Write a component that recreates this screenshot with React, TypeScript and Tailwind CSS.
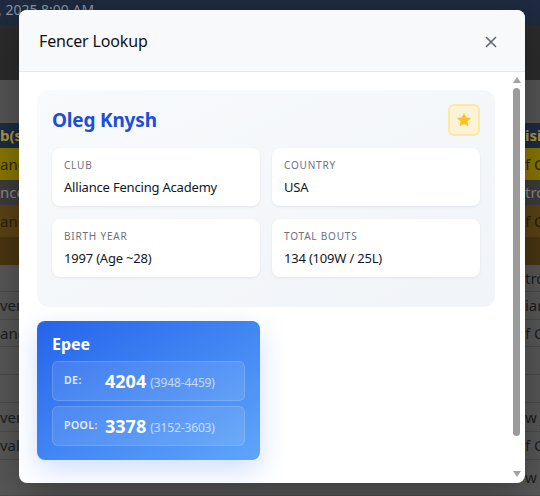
import React from "react";

const rows: { h: number; bg: string; left: string; right: string; tc: string; bold?: boolean; border?: boolean }[] = [
  { h: 43, bg: "bg-[#565656]", left: "", right: "", tc: "text-[#222]" },
  { h: 25, bg: "bg-[#1e2c45]", left: "b(s", right: "isi", tc: "text-[#b09a3c]", bold: true },
  { h: 32, bg: "bg-[#8a7800]", left: "anc", right: "f C", tc: "text-[#302a00]" },
  { h: 25, bg: "bg-[#3d3d3d]", left: "ncer", right: "tro", tc: "text-[#8a8a8a]" },
  { h: 32, bg: "bg-[#5c4316]", left: "anc", right: "f C", tc: "text-[#2b1f08]" },
  { h: 28, bg: "bg-[#4a3612]", left: "", right: "", tc: "text-[#222]" },
  { h: 27, bg: "bg-[#585858]", left: "", right: "tro", tc: "text-[#1e1e1e]", border: true },
  { h: 28, bg: "bg-[#585858]", left: "ven", right: "iar", tc: "text-[#1e1e1e]", border: true },
  { h: 27, bg: "bg-[#585858]", left: "and", right: "f C", tc: "text-[#1e1e1e]", border: true },
  { h: 28, bg: "bg-[#585858]", left: "", right: "", tc: "text-[#1e1e1e]", border: true },
  { h: 28, bg: "bg-[#585858]", left: "", right: "", tc: "text-[#1e1e1e]", border: true },
  { h: 29, bg: "bg-[#585858]", left: "ver", right: "w J", tc: "text-[#1e1e1e]", border: true },
  { h: 28, bg: "bg-[#585858]", left: "vali", right: "f C", tc: "text-[#1e1e1e]", border: true },
  { h: 36, bg: "bg-[#585858]", left: "", right: "w E", tc: "text-[#1e1e1e]", border: true },
];

function InfoCard({ label, value }: { label: string; value: string }) {
  return (
    <div className="h-[58px] rounded-lg bg-white px-3 pt-[10px] shadow-[0_1px_3px_rgba(15,23,42,0.08)]">
      <div className="text-[10px] leading-[14px] tracking-[0.08em] text-[#6b7280] uppercase">{label}</div>
      <div className="mt-[5px] text-[13px] leading-[20px] tracking-[-0.015em] text-[#111827]">{value}</div>
    </div>
  );
}

function RatingRow({ label, value, range }: { label: string; value: string; range: string }) {
  return (
    <div className="flex h-[40px] items-center rounded-md border border-white/15 bg-white/10 px-[11px]">
      <div className="w-[41px] text-[10.5px] font-semibold tracking-[0.04em] text-white/85">{label}</div>
      <div className="text-[18px] leading-none font-bold text-white">{value}</div>
      <div className="ml-[4px] pt-[3px] text-[12px] tracking-[-0.01em] text-white/65">{range}</div>
    </div>
  );
}

export default function App() {
  return (
    <div className="relative h-[496px] w-[540px] overflow-hidden bg-[#585858] font-['Noto_Sans',sans-serif]">
      {/* background page (dimmed) */}
      <div className="flex h-full flex-col">
        <div className="h-[25px] overflow-hidden bg-[#1f2b40] text-[14px] leading-[20px] text-[#8d96a6] whitespace-nowrap">
          <span className="-ml-[2px]">, 2025 8:00 AM</span>
        </div>
        <div className="h-[55px] bg-[#2c2c2c]" />
        {rows.map((r, i) => (
          <div
            key={i}
            style={{ height: r.h }}
            className={`flex items-center justify-between text-[15px] whitespace-nowrap ${r.bg} ${r.tc} ${r.bold ? "font-bold" : ""} ${r.border ? "border-b border-[#4b4b4b]" : ""}`}
          >
            <div className="w-[19px] overflow-hidden">{r.left}</div>
            <div className="w-[15px] overflow-hidden">{r.right}</div>
          </div>
        ))}
      </div>

      {/* modal */}
      <div className="absolute top-[10px] left-[19px] flex h-[473px] w-[506px] flex-col overflow-hidden rounded-lg bg-white shadow-[0_10px_40px_rgba(0,0,0,0.35)]">
        <div className="flex h-[62px] shrink-0 items-center justify-between border-b border-[#e5e7eb] bg-[#f8f9fb] pr-[27px] pl-5">
          <div className="text-[16px] tracking-[-0.01em] text-[#111]">Fencer Lookup</div>
          <svg width="14" height="14" viewBox="0 0 14 14" className="mt-[2px]">
            <path d="M2.5 2.5 L11.5 11.5 M11.5 2.5 L2.5 11.5" stroke="#5f6670" strokeWidth="1.6" strokeLinecap="round" />
          </svg>
        </div>
        <div className="flex min-h-0 flex-1">
          <div className="flex-1 overflow-hidden pt-[18px] pr-4 pl-[18px]">
            <div className="rounded-xl bg-gradient-to-br from-[#f8fafc] to-[#f1f4f8] px-[15px] pt-[14px] pb-[30px]">
              <div className="flex h-[32px] items-center justify-between">
                <div className="text-[19px] font-bold tracking-[-0.01em] text-[#1d4ed8]">Oleg Knysh</div>
                <div className="flex h-[32px] w-[32px] items-center justify-center rounded-md border-2 border-[#fbe9a6] bg-[#fbf3d6]">
                  <svg width="16" height="16" viewBox="0 0 24 24">
                    <path
                      d="M12 2.5l2.9 6.2 6.8.7-5.1 4.6 1.5 6.7L12 17.3l-6.1 3.4 1.5-6.7-5.1-4.6 6.8-.7z"
                      fill="#fbbf24"
                      stroke="#fbbf24"
                      strokeWidth="1"
                      strokeLinejoin="round"
                    />
                  </svg>
                </div>
              </div>
              <div className="mt-3 grid grid-cols-2 gap-x-3 gap-y-[13px]">
                <InfoCard label="Club" value="Alliance Fencing Academy" />
                <InfoCard label="Country" value="USA" />
                <InfoCard label="Birth Year" value="1997 (Age ~28)" />
                <InfoCard label="Total Bouts" value="134 (109W / 25L)" />
              </div>
            </div>
            <div className="mt-[14px] grid grid-cols-2 gap-3">
              <div className="rounded-lg bg-gradient-to-br from-[#2563eb] to-[#60a5fa] px-[15px] pt-[12px] pb-[14px] shadow-[0_10px_28px_rgba(37,99,235,0.22)]">
                <div className="mb-[6px] text-[16px] leading-[22px] font-bold text-white">Epee</div>
                <div className="flex flex-col gap-[5px]">
                  <RatingRow label="DE:" value="4204" range="(3948-4459)" />
                  <RatingRow label="POOL:" value="3378" range="(3152-3603)" />
                </div>
              </div>
              <div />
            </div>
          </div>
          {/* scrollbar */}
          <div className="flex w-[14px] shrink-0 flex-col items-center pr-[3px]">
            <svg width="10" height="8" viewBox="0 0 10 8" className="mt-[4px]">
              <path d="M5 1 L9 7 L1 7 Z" fill="#a3a3a3" />
            </svg>
            <div className="mt-[4px] h-[348px] w-[7px] rounded-full bg-[#9b9b9b]" />
            <div className="flex-1" />
            <svg width="10" height="8" viewBox="0 0 10 8" className="mb-[5px]">
              <path d="M1 1 L9 1 L5 7 Z" fill="#a3a3a3" />
            </svg>
          </div>
        </div>
      </div>
    </div>
  );
}
